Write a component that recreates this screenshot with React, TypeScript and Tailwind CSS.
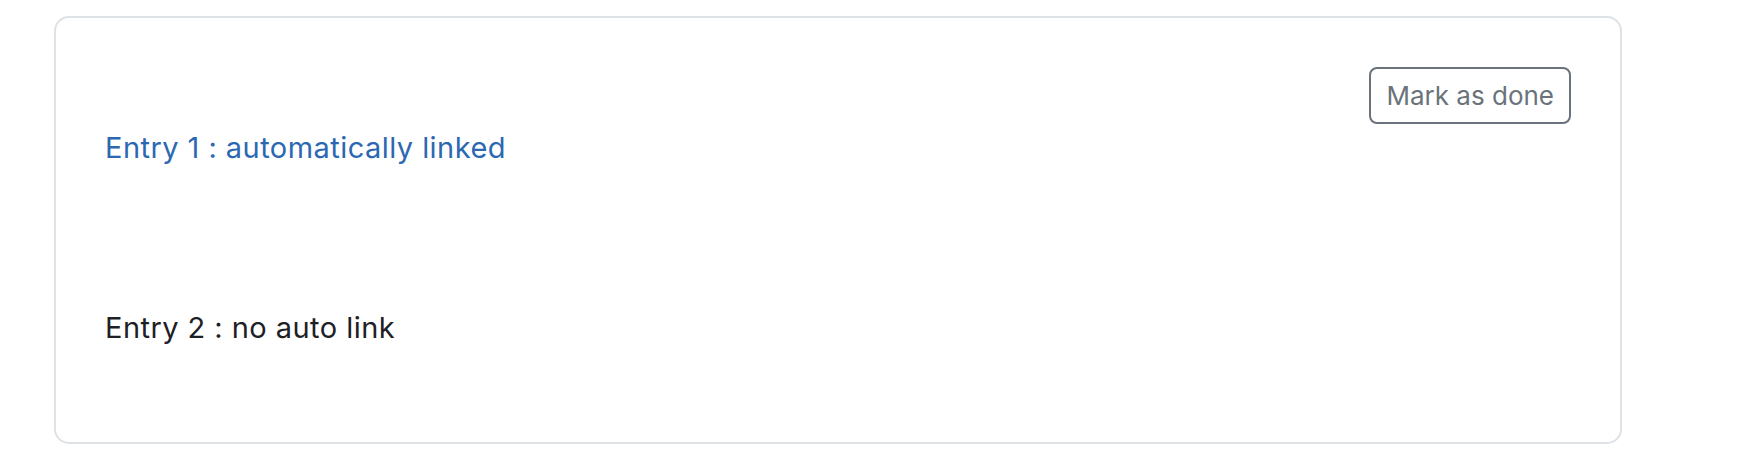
import React from 'react';

const entries = [
  { id: 1, label: 'Entry 1 : automatically linked', linked: true },
  { id: 2, label: 'Entry 2 : no auto link', linked: false },
];

export default function App() {
  return (
    <div className="w-[1738px] h-[468px] bg-white pt-[16px] pl-[54px] font-['Inter',_'Liberation_Sans',_sans-serif] [font-feature-settings:'calt'_0]">
      <div className="w-[1568px] h-[428px] border-2 border-[#dee2e6] rounded-[15px] px-[49px] pt-[49px] flex flex-col">
        {/* Completion button */}
        <div className="flex justify-end">
          <button className="h-[57px] px-[15px] border-2 border-[#6a737b] rounded-[8px] text-[26px] text-[#6a737b] leading-none">
            Mark as done
          </button>
        </div>

        <div className="mt-[3px] text-[29px] leading-[42px] tracking-[0.45px]">
          <a href="#" className="text-[#2c68b2]">{entries[0].label}</a>
        </div>

        <div className="mt-[138px] text-[29px] leading-[42px] tracking-[0.45px] text-[#1d2125]">
          {entries[1].label}
        </div>
      </div>
    </div>
  );
}
